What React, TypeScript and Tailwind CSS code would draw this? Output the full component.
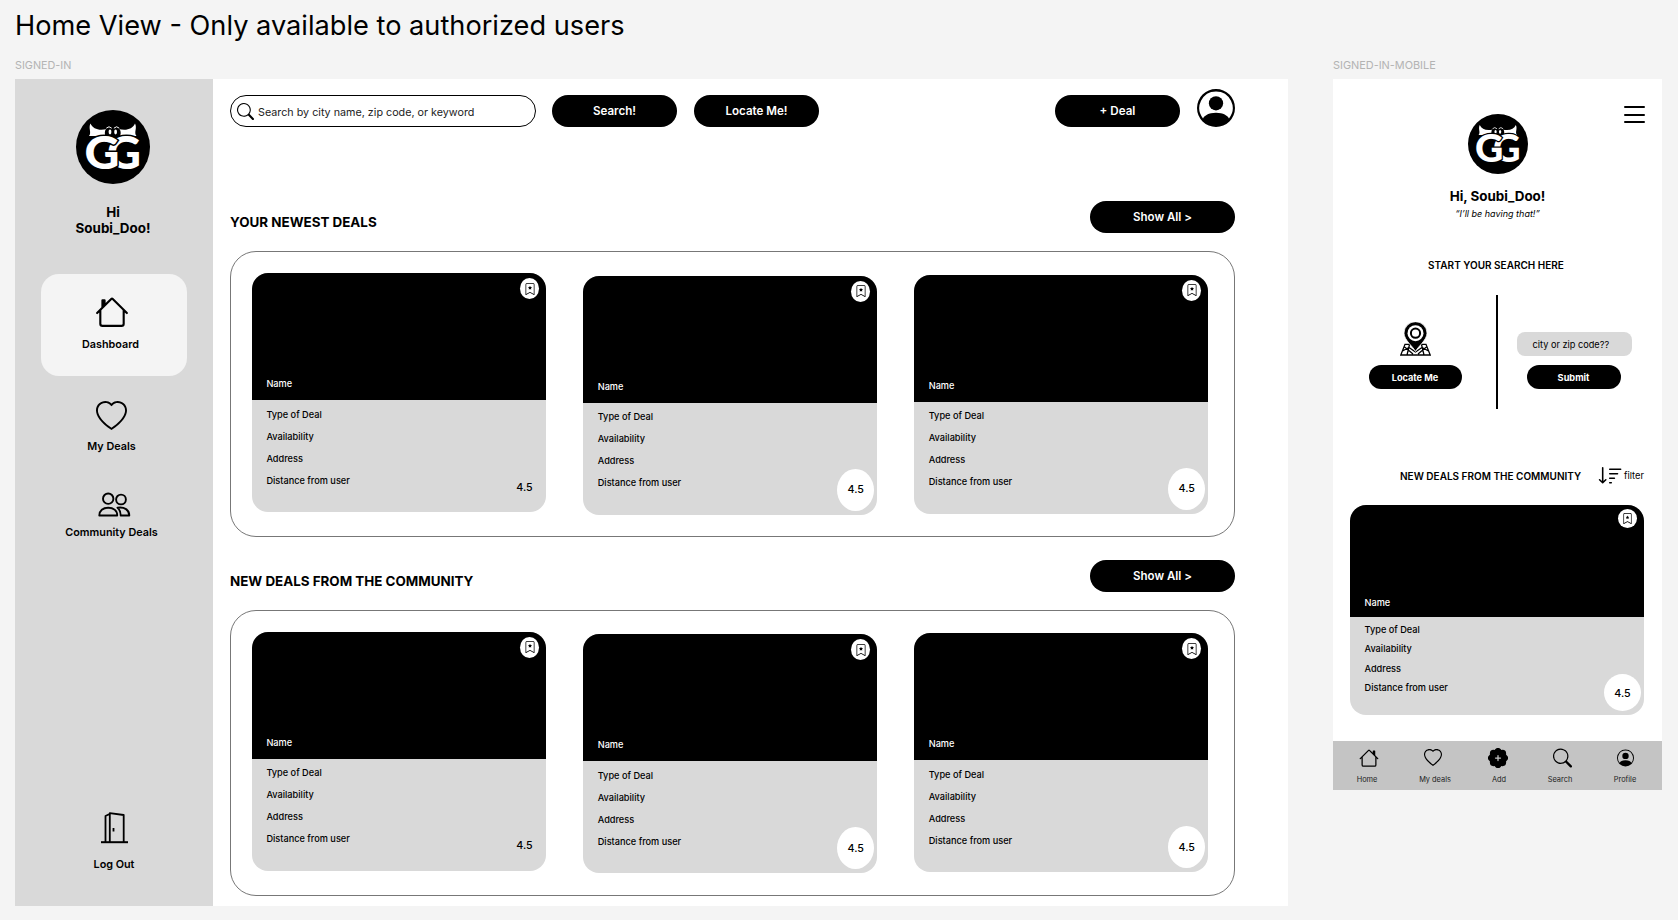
import type { ReactNode } from "react";
import {
  BsBookmarkStar,
  BsHeart,
  BsHouse,
  BsPatchPlusFill,
  BsPersonCircle,
  BsSearch,
  BsSortDown,
} from "react-icons/bs";

const DETAILS = ["Type of Deal", "Availability", "Address", "Distance from user"];

function Logo({ className }: { className: string }) {
  return (
    <svg viewBox="0 0 74 74" className={className}>
      <circle cx="37" cy="37" r="37" fill="#000" />
      <g fill="#fff">
        <path d="M14.5 13.5C17 19 23 21 31 19V26H13C16 22.5 12 18.5 14.5 13.5Z" />
        <path d="M59 13.5C56.500 19 50.500 21 42.500 19V26H60.500C57.500 22.500 61.500 18.500 59 13.500Z" />
      </g>
      <ellipse cx="33" cy="23" rx="4.2" ry="5.500" fill="#000" />
      <ellipse cx="40.500" cy="23" rx="4.2" ry="5.500" fill="#000" />
      <path d="M30.3 18.2Q33 15.3 35.7 18.2M37.900 18.2Q40.600 15.3 43.300 18.2" fill="none" stroke="#fff" strokeWidth="1" />
      <ellipse cx="34" cy="22" rx="1.4" ry="2.4" fill="#fff" />
      <ellipse cx="39.600" cy="22" rx="1.4" ry="2.4" fill="#fff" />
      <g
        fill="#fff"
        stroke="#000"
        strokeWidth="3"
        fontFamily="Lato, Inter, sans-serif"
        fontWeight="900"
        fontSize="46"
        style={{ paintOrder: "stroke" }}
      >
        <text x="31" y="59" textLength="34" lengthAdjust="spacingAndGlyphs">
          G
        </text>
        <text x="8.5" y="59" textLength="35" lengthAdjust="spacingAndGlyphs">
          G
        </text>
      </g>
    </svg>
  );
}

function PeopleIcon() {
  return (
    <svg viewBox="0 0 33 25" className="h-[25px] w-[33px]" fill="none" stroke="#000" strokeWidth="1.9" strokeLinejoin="round">
      <circle cx="10.2" cy="6.7" r="5.2" />
      <circle cx="23" cy="7.5" r="4.9" />
      <path d="M1.3 23.5C1.3 18.5 5 15.7 10.2 15.7S19.2 18.5 19.2 23.5Z" />
      <path d="M19.5 15.7C26.5 14.6 31.3 18 31.3 23.5H22.7C22.7 20 21.7 17.5 19.5 15.7Z" />
    </svg>
  );
}

function DoorIcon() {
  return (
    <svg viewBox="0 0 27 32" className="h-8 w-[27px]" fill="none" stroke="#000" strokeWidth="1.8" strokeLinejoin="round">
      <path d="M0 30.2H27" strokeWidth="2" />
      <path d="M4.5 30V4L8.5 2M8.8 30V1.2L22.7 3V30" />
      <path d="M12.5 16V19.5" />
    </svg>
  );
}

function MapPinIcon() {
  return (
    <svg viewBox="0 0 31 34" className="h-[34px] w-[31px]">
      <path
        d="M5 22.3H26L30.2 33H.8ZM9.5 22.5L7 33M21.5 22.5L24 33M2.5 29L9 25.5L15.5 30L22 25.5L28.5 29M4 24.5L13 32M27 24.5L18 32"
        fill="none"
        stroke="#000"
        strokeWidth="1.3"
      />
      <path d="M15.5 29.5C13.5 25 4 18 4 11.2A11.5 11.5 0 0 1 27 11.2C27 18 17.5 25 15.5 29.5Z" fill="#000" stroke="#fff" strokeWidth="0.8" />
      <circle cx="15.5" cy="11.2" r="8" fill="#fff" />
      <circle cx="15.5" cy="11.2" r="4.6" fill="#fff" stroke="#000" strokeWidth="2" />
    </svg>
  );
}

function Pill({ className, children }: { className: string; children: ReactNode }) {
  return (
    <button className={`flex shrink-0 items-center justify-center rounded-full bg-black text-white ${className}`}>
      {children}
    </button>
  );
}

function DealCard({ className = "", bubble = true }: { className?: string; bubble?: boolean }) {
  return (
    <article className={`relative h-[239px] w-[294px] shrink-0 overflow-hidden rounded-[16px] bg-[#d9d9d9] text-[9.2px] font-medium ${className}`}>
      <div className="flex h-[127px] items-end bg-black pb-[7px] pl-[14.4px] leading-[18px] text-white">Name</div>
      <ul className="pt-[3.5px] pl-[14.4px] leading-[22px]">
        {DETAILS.map((d) => (
          <li key={d}>{d}</li>
        ))}
      </ul>
      <span className="absolute top-[5px] right-[7px] flex h-[21px] w-[19px] items-center justify-center rounded-[50%] bg-white">
        <BsBookmarkStar className="size-[12px]" />
      </span>
      <span
        className={`absolute right-[3px] bottom-[4px] flex h-[42px] w-[37px] items-center justify-center rounded-[50%] pt-[2px] text-[10.7px] ${bubble ? "bg-white" : ""}`}
      >
        4.5
      </span>
    </article>
  );
}

function DealSection({ title }: { title: string }) {
  return (
    <section className="mb-[22.5px]">
      <div className="flex items-start justify-between">
        <h2 className="mt-[5px] text-[13.4px] leading-8 font-bold">{title}</h2>
        <Pill className="h-8 w-[145px] pt-[2px] text-[11.5px] font-semibold">Show All &gt;</Pill>
      </div>
      <div className="mt-[13px] flex h-[286px] w-[1005px] items-start rounded-[26px] border border-[#777] pt-[21px] pl-[21px]">
        <DealCard bubble={false} />
        <DealCard className="mt-[2.5px] ml-[37.3px]" />
        <DealCard className="mt-[1.5px] ml-[37px]" />
      </div>
    </section>
  );
}

function Desktop() {
  return (
    <div className="flex h-[827px] w-[1273px] bg-white">
      <aside className="flex w-[198px] shrink-0 flex-col items-center bg-[#d9d9d9] text-[10.8px] leading-4 font-semibold">
        <Logo className="mt-[31px] mr-[2px] size-[74px]" />
        <p className="mt-[19.5px] pr-[2px] text-center text-[13.4px] leading-[16px] font-bold">
          Hi
          <br />
          Soubi_Doo!
        </p>
        <div className="mt-[38px] flex h-[102px] w-[146px] flex-col items-center rounded-[18px] bg-[#f4f4f4] pt-[21px] pr-[5px]">
          <BsHouse className="size-[34px] -scale-x-100" />
          <span className="mt-[8px] mr-[2px]">Dashboard</span>
        </div>
        <div className="mt-[25px] flex flex-col items-center pr-[5px]">
          <BsHeart className="size-[31px]" />
          <span className="mt-[7px]">My Deals</span>
        </div>
        <div className="mt-[37px] flex flex-col items-center pr-[5px]">
          <span className="pl-[5px]">
            <PeopleIcon />
          </span>
          <span className="mt-[8px]">Community Deals</span>
        </div>
        <div className="mt-auto mb-[33px] flex flex-col items-center">
          <DoorIcon />
          <span className="mt-[13px]">Log Out</span>
        </div>
      </aside>
      <main className="w-[1022px] pt-[10px] pl-[17px]">
        <header className="mb-[74px] flex h-[38px] items-end text-[11.6px] font-semibold">
          <div className="flex h-8 w-[306px] items-center rounded-full border border-black pl-[6px]">
            <BsSearch className="size-[17px]" />
            <span className="mt-[4px] ml-[4px] text-[10.75px] font-normal text-[#222]">
              Search by city name, zip code, or keyword
            </span>
          </div>
          <Pill className="ml-4 h-8 w-[125px] pt-[2px]">Search!</Pill>
          <Pill className="ml-[17px] h-8 w-[125px] pt-[2px]">Locate Me!</Pill>
          <Pill className="ml-auto h-8 w-[125px] pt-[2px]">+ Deal</Pill>
          <BsPersonCircle className="ml-[17px] size-[38px]" />
        </header>
        <DealSection title="YOUR NEWEST DEALS" />
        <DealSection title="NEW DEALS FROM THE COMMUNITY" />
      </main>
    </div>
  );
}

function NavItem({ icon, label, className }: { icon: ReactNode; label: string; className: string }) {
  return (
    <div className={`flex flex-col items-center ${className}`}>
      {icon}
      <span className="mt-[6.5px] whitespace-nowrap">{label}</span>
    </div>
  );
}

function Mobile() {
  return (
    <div className="flex h-[711px] w-[329px] flex-col bg-white">
      <div className="flex h-[35px] items-end justify-end pr-[17px]">
        <div className="-mb-[9px] flex h-[17px] w-[21px] flex-col justify-between">
          <span className="h-[2px] rounded-full bg-black" />
          <span className="h-[2px] rounded-full bg-black" />
          <span className="h-[2px] rounded-full bg-black" />
        </div>
      </div>
      <div className="flex flex-col items-center">
        <Logo className="size-[60px]" />
        <p className="mt-[13px] text-[13.4px] leading-[18px] font-bold">Hi, Soubi_Doo!</p>
        <p className="mt-[2px] text-[9px] leading-[14px] italic">“I’ll be having that!”</p>
        <p className="mt-[36px] pr-[3px] text-[10px] leading-4 font-semibold">START YOUR SEARCH HERE</p>
      </div>
      <div className="mt-[22px] flex h-[114px] text-[9.2px]">
        <div className="flex w-[163px] flex-col items-center pt-[27px] pl-[1px]">
          <MapPinIcon />
          <Pill className="mt-[9px] h-6 w-[93px] pt-[1px] font-bold">Locate Me</Pill>
        </div>
        <div className="w-[2px] bg-black" />
        <div className="flex w-[151px] flex-col items-center pt-[37px]">
          <div className="ml-[1px] flex h-[24px] w-[115px] items-center rounded-[8px] bg-[#d9d9d9] pt-[2px] pl-[16px]">
            city or zip code??
          </div>
          <Pill className="mt-[9px] h-6 w-[94px] pt-[1px] font-bold">Submit</Pill>
        </div>
      </div>
      <div className="mt-[57px] flex h-5 items-center pl-[67px]">
        <h2 className="w-[182px] text-[10px] font-semibold whitespace-nowrap">NEW DEALS FROM THE COMMUNITY</h2>
        <BsSortDown className="ml-[16px] h-[24px] w-[25px]" preserveAspectRatio="none" />
        <span className="ml-[1px] text-[9.3px]">filter</span>
      </div>
      <article className="relative mt-[19px] ml-[17px] h-[210px] w-[294px] overflow-hidden rounded-[16px] bg-[#d9d9d9] text-[9.2px] font-medium">
        <div className="flex h-[112px] items-end bg-black pb-[5px] pl-[14.5px] leading-[18px] text-white">Name</div>
        <ul className="pt-[3px] pl-[14.5px] leading-[19.4px]">
          {DETAILS.map((d) => (
            <li key={d}>{d}</li>
          ))}
        </ul>
        <span className="absolute top-[4px] right-[7px] flex size-[19px] items-center justify-center rounded-full bg-white">
          <BsBookmarkStar className="size-[11px]" />
        </span>
        <span className="absolute right-[3px] bottom-[4px] flex size-[37px] items-center justify-center rounded-full bg-white pt-[3px] text-[10.7px]">
          4.5
        </span>
      </article>
      <nav className="mt-auto flex h-[49px] bg-[#c4c4c4] pt-[7px] text-[7.4px] leading-[10px] text-[#222]">
        <NavItem className="ml-[13px] w-[42px]" label="Home" icon={<BsHouse className="ml-[3px] size-5 text-black" />} />
        <NavItem className="ml-[25px] w-[44px]" label="My deals" icon={<BsHeart className="mr-[4px] mb-[1px] h-[19px] w-5 pt-[1px] text-black" />} />
        <NavItem className="ml-[21px] w-[42px]" label="Add" icon={<BsPatchPlusFill className="mr-[2px] size-5 text-black" />} />
        <NavItem className="ml-[19px] w-[42px]" label="Search" icon={<BsSearch className="ml-[4px] h-5 w-[19px] text-black" />} />
        <NavItem className="ml-[23px] w-[42px]" label="Profile" icon={<BsPersonCircle className="h-5 w-[17px] text-black" />} />
      </nav>
    </div>
  );
}

export default function App() {
  return (
    <div className="h-[920px] w-[1678px] overflow-hidden bg-[#f4f4f4] pl-[15px] font-['Inter',sans-serif] text-black">
      <h1 className="pt-[6px] text-[27.2px] leading-10">Home View - Only available to authorized users</h1>
      <div className="mt-[11px] flex items-start">
        <section>
          <p className="h-[22px] pt-[0.5px] text-[10.8px] leading-4 text-[#b3b3b3]">SIGNED-IN</p>
          <Desktop />
        </section>
        <section className="ml-[45px]">
          <p className="h-[22px] text-[10.9px] leading-4 text-[#b3b3b3]">SIGNED-IN-MOBILE</p>
          <Mobile />
        </section>
      </div>
    </div>
  );
}
